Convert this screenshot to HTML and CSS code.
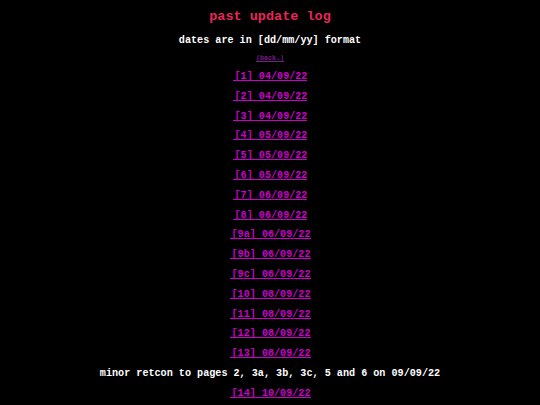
FILE: index.html
```html
<!DOCTYPE html>
<html>
<head>
<meta charset="utf-8">
<title>past update log</title>
<link rel="stylesheet" href="styles.css">
</head>
<body>
<div class="log">
  <h1 class="title">past update log</h1>
  <p class="note">dates are in [dd/mm/yy] format</p>
  <p class="back"><a href="#" class="back-link">(back.)</a></p>
  <p class="entry"><a href="#">[1] 04/09/22</a></p>
  <p class="entry"><a href="#">[2] 04/09/22</a></p>
  <p class="entry"><a href="#">[3] 04/09/22</a></p>
  <p class="entry"><a href="#">[4] 05/09/22</a></p>
  <p class="entry"><a href="#">[5] 05/09/22</a></p>
  <p class="entry"><a href="#">[6] 05/09/22</a></p>
  <p class="entry"><a href="#">[7] 06/09/22</a></p>
  <p class="entry"><a href="#">[8] 06/09/22</a></p>
  <p class="entry"><a href="#">[9a] 06/09/22</a></p>
  <p class="entry"><a href="#">[9b] 06/09/22</a></p>
  <p class="entry"><a href="#">[9c] 06/09/22</a></p>
  <p class="entry"><a href="#">[10] 08/09/22</a></p>
  <p class="entry"><a href="#">[11] 08/09/22</a></p>
  <p class="entry"><a href="#">[12] 08/09/22</a></p>
  <p class="entry"><a href="#">[13] 08/09/22</a></p>
  <p class="note retcon">minor retcon to pages 2, 3a, 3b, 3c, 5 and 6 on 09/09/22</p>
  <p class="entry"><a href="#">[14] 10/09/22</a></p>
</div>
</body>
</html>
```

FILE: styles.css
```css
html, body {
  background: #000;
}

body {
  margin: 0;
  padding-top: 9px;
  font-family: "Liberation Mono", "Courier New", monospace;
  font-weight: bold;
  color: #fff;
  text-align: center;
}

.log {
  display: flex;
  flex-direction: column;
  align-items: center;
}

.title {
  margin: 0;
  font-size: 13.5px;
  line-height: 16px;
  color: #e8265a;
}

.note {
  margin: 10px 0 0;
  font-size: 10.15px;
  line-height: 12px;
  white-space: pre;
}

.back {
  margin: 7px 0 0;
  font-size: 6.7px;
  line-height: 8px;
}

.back-link {
  color: #7a1a8a;
}

.entry {
  margin: 0;
  height: 19.8px;
  font-size: 10.15px;
  line-height: 12px;
  white-space: pre;
}

.back + .entry {
  margin-top: 9px;
}

/* a sliver of underline runs in front of each entry label */
.entry a {
  color: #c800c8;
  padding-left: 2px;
  text-decoration: none;
  background: linear-gradient(currentColor, currentColor) left bottom 1px / 100% 1px no-repeat;
}

.retcon {
  margin: 0;
  height: 19.8px;
}
```
